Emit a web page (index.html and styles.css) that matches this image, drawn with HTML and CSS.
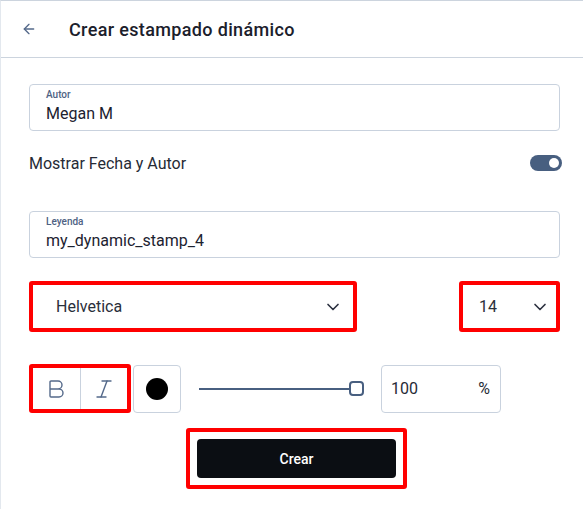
FILE: index.html
```html
<!DOCTYPE html>
<html lang="es">
<head>
<meta charset="utf-8">
<title>Crear estampado dinámico</title>
<link rel="stylesheet" href="styles.css">
</head>
<body>
<div class="panel">
  <header class="header">
    <button class="back" aria-label="Volver">
      <svg width="16" height="16" viewBox="0 0 24 24" fill="none" stroke="currentColor" stroke-width="2" stroke-linecap="round" stroke-linejoin="round"><path d="M19 12H5"/><path d="M12 19l-7-7 7-7"/></svg>
    </button>
    <h1 class="title">Crear estampado dinámico</h1>
  </header>

  <main class="content">
    <label class="field field-author">
      <span class="field-label">Autor</span>
      <span class="field-value">Megan M</span>
    </label>

    <div class="toggle-row">
      <span>Mostrar Fecha y Autor</span>
      <span class="toggle"><span class="knob"></span></span>
    </div>

    <label class="field field-legend">
      <span class="field-label">Leyenda</span>
      <span class="field-value">my_dynamic_stamp_4</span>
    </label>

    <div class="select-row">
      <div class="select select-font marked">
        <span>Helvetica</span>
        <svg class="chev" width="20" height="20" viewBox="0 0 24 24" fill="none" stroke="currentColor" stroke-width="2" stroke-linecap="round" stroke-linejoin="round"><path d="M6 9l6 6 6-6"/></svg>
      </div>
      <div class="select select-size marked">
        <span>14</span>
        <svg class="chev" width="20" height="20" viewBox="0 0 24 24" fill="none" stroke="currentColor" stroke-width="2" stroke-linecap="round" stroke-linejoin="round"><path d="M6 9l6 6 6-6"/></svg>
      </div>
    </div>

    <div class="tool-row">
      <div class="style-group marked">
        <button class="tool" aria-label="Negrita">
          <svg width="24" height="24" viewBox="0 0 24 24" fill="none" stroke="currentColor" stroke-width="1.4" stroke-linecap="round" stroke-linejoin="round"><path d="M6 12h9a4 4 0 0 1 0 8H7a1 1 0 0 1-1-1V5a1 1 0 0 1 1-1h7a4 4 0 0 1 0 8"/></svg>
        </button>
        <button class="tool tool-italic" aria-label="Cursiva">
          <svg width="24" height="24" viewBox="0 0 24 24" fill="none" stroke="currentColor" stroke-width="1.4" stroke-linecap="round" stroke-linejoin="round"><line x1="19" y1="4" x2="10" y2="4"/><line x1="14" y1="20" x2="5" y2="20"/><line x1="15" y1="4" x2="9" y2="20"/></svg>
        </button>
      </div>
      <button class="color-btn" aria-label="Color"><span class="dot"></span></button>
      <div class="slider"><span class="track"></span><span class="thumb"></span></div>
      <div class="percent"><span>100</span><span>%</span></div>
    </div>

    <div class="actions">
      <div class="create-frame">
        <button class="create">Crear</button>
      </div>
    </div>
  </main>
</div>
</body>
</html>
```

FILE: styles.css
```css
* { box-sizing: border-box; }

body {
  margin: 0;
  background: #fff;
  font-family: Roboto, "Liberation Sans", sans-serif;
  color: #1c2230;
}

.panel {
  width: 583px;
  height: 509px;
  border-top: 1px solid #ccd4de;
  border-left: 1px solid #e3e8ee;
}

.header {
  height: 57px;
  display: flex;
  align-items: center;
  border-bottom: 1px solid #ccd4de;
  padding-left: 20px;
}

.back {
  border: 0;
  background: none;
  padding: 0;
  width: 16px;
  height: 16px;
  color: #54698a;
  display: flex;
}

.title {
  margin: 0 0 0 32px;
  font-size: 18px;
  font-weight: 500;
  color: #1b202b;
  letter-spacing: 0.35px;
}

.content {
  padding: 26px 23px 0 28px;
}

.field {
  display: flex;
  flex-direction: column;
  height: 47px;
  border: 1px solid #c9d2de;
  border-radius: 4px;
  padding: 4px 16px 0;
}

.field-label {
  font-size: 10px;
  font-weight: 500;
  color: #4e6283;
  line-height: 12px;
}

.field-value {
  font-size: 16px;
  line-height: 20px;
  margin-top: 3px;
  color: #1c2230;
}

.toggle-row {
  height: 28px;
  margin: 18px -2px 34px 0;
  display: flex;
  align-items: center;
  justify-content: space-between;
  font-size: 16px;
  color: #262b36;
}

.toggle {
  width: 32px;
  height: 16px;
  border-radius: 8px;
  background: #485f80;
  display: flex;
  align-items: center;
  justify-content: flex-end;
  padding-right: 3px;
}

.knob {
  width: 10px;
  height: 10px;
  border-radius: 50%;
  background: #fff;
}

.select-row {
  margin-top: 23px;
  display: flex;
  justify-content: space-between;
  align-items: flex-start;
}

.marked {
  border: 4px solid #ff0000 !important;
  border-radius: 3px;
}

.select {
  height: 51px;
  display: flex;
  align-items: center;
  justify-content: space-between;
  font-size: 16px;
  color: #2a2f3a;
}

.select-font {
  width: 328px;
  padding: 0 10px 0 23px;
}

.select-size {
  width: 101px;
  padding: 0 6px 0 16px;
}

.chev { color: #2c3140; }

.tool-row {
  margin-top: 32px;
  display: flex;
  align-items: center;
}

.style-group {
  display: flex;
  width: 102px;
  height: 49px;
}

.tool {
  flex: 1;
  border: 0;
  background: #fff;
  color: #54698a;
  display: flex;
  align-items: center;
  justify-content: center;
  padding: 0;
}

.tool-italic {
  border-left: 1px solid #c9d2de;
}

.color-btn {
  margin-left: 2px;
  width: 48px;
  height: 48px;
  border: 1px solid #c9d2de;
  border-radius: 4px;
  background: #fff;
  display: flex;
  align-items: center;
  justify-content: center;
  padding: 0;
}

.dot {
  width: 22px;
  height: 22px;
  border-radius: 50%;
  background: #000;
}

.slider {
  margin-left: 18px;
  width: 165px;
  height: 16px;
  display: flex;
  align-items: center;
}

.track {
  flex: 1;
  height: 2px;
  background: #485f80;
}

.thumb {
  width: 15px;
  height: 15px;
  border: 2px solid #485f80;
  border-radius: 4px;
  background: #fff;
}

.percent {
  margin-left: 17px;
  width: 120px;
  height: 48px;
  border: 1px solid #c9d2de;
  border-radius: 4px;
  display: flex;
  align-items: center;
  justify-content: space-between;
  padding: 0 10px 0 9px;
  font-size: 16px;
  color: #262b36;
}

.actions {
  margin-top: 15px;
  padding-left: 157px;
}

.create-frame {
  width: 221px;
  padding: 7px;
  border: 4px solid #ff0000;
  border-radius: 3px;
}

.create {
  display: block;
  width: 199px;
  height: 39px;
  border: 0;
  border-radius: 4px;
  background: #0b0e13;
  color: #fff;
  font-family: Roboto, "Liberation Sans", sans-serif;
  font-size: 14px;
  font-weight: 500;
}
```
